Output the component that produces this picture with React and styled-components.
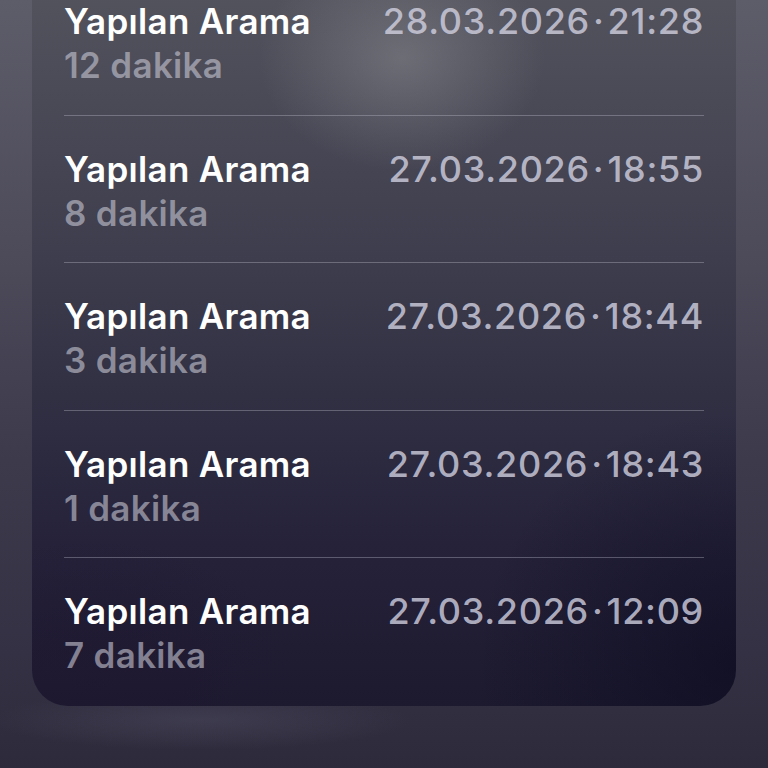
import React from "react";
import styled, { createGlobalStyle } from "styled-components";

const Global = createGlobalStyle`
  html, body { margin: 0; padding: 0; }
  body {
    width: 768px;
    height: 768px;
    overflow: hidden;
    font-family: Inter, "Noto Sans", "Liberation Sans", sans-serif;
    -webkit-font-smoothing: antialiased;
  }
`;

const Screen = styled.div`
  width: 768px;
  height: 768px;
  overflow: hidden;
  box-sizing: border-box;
  padding: 0 32px;
  background:
    radial-gradient(ellipse 280px 40px at 200px 720px, rgba(80, 76, 98, 0.45), transparent 75%),
    linear-gradient(180deg, #5d5c69 0%, #4c4a59 35%, #3c3a4b 60%, #333143 85%, #2d2b3b 100%);
`;

const Card = styled.div`
  margin-top: -32px;
  border-radius: 0 0 36px 36px;
  overflow: hidden;
  padding: 0 32px;
  background:
    radial-gradient(ellipse 190px 150px at 370px 90px, rgba(140, 140, 146, 0.5), transparent 75%),
    radial-gradient(ellipse 320px 320px at 700px 700px, rgba(8, 8, 28, 0.55), transparent 80%),
    radial-gradient(ellipse 260px 200px at 60px 730px, rgba(30, 20, 48, 0.5), transparent 80%),
    linear-gradient(180deg, #55555f 0%, #4a4a57 18%, #3e3e4e 38%, #313043 58%, #25223a 78%, #1d1a2f 100%);
`;

const Row = styled.div`
  height: 147.6px;
  box-sizing: border-box;
  padding-top: 31px;
  display: grid;
  grid-template-columns: 1fr auto;
  grid-template-rows: 44px 44px;
  border-bottom: ${(p) => (p.$last ? "none" : "1.5px solid rgba(190, 190, 205, 0.36)")};
`;

const Title = styled.div`
  font-size: 35px;
  line-height: 44px;
  font-weight: 600;
  color: #ffffff;
  letter-spacing: 0.3px;
  white-space: nowrap;
`;

const Duration = styled.div`
  grid-column: 1;
  font-size: 35px;
  line-height: 44px;
  font-weight: 600;
  color: rgba(200, 200, 212, 0.6);
  letter-spacing: 0.3px;
`;

const Stamp = styled.div`
  grid-column: 2;
  grid-row: 1;
  font-size: 36px;
  line-height: 44px;
  font-weight: 450;
  color: rgba(210, 210, 226, 0.8);
  letter-spacing: 0.7px;
  white-space: nowrap;
  text-align: right;
`;

const Dot = styled.span`
  margin: 0 3px;
`;

const calls = [
  { date: "28.03.2026", time: "21:28", mins: 12 },
  { date: "27.03.2026", time: "18:55", mins: 8 },
  { date: "27.03.2026", time: "18:44", mins: 3 },
  { date: "27.03.2026", time: "18:43", mins: 1 },
  { date: "27.03.2026", time: "12:09", mins: 7 },
];

export default function App() {
  return (
    <>
      <Global />
      <Screen>
        <Card>
          {calls.map((c, i) => (
            <Row key={i} $last={i === calls.length - 1}>
              <Title>Yapılan Arama</Title>
              <Stamp>
                {c.date}
                <Dot>·</Dot>
                {c.time}
              </Stamp>
              <Duration>{c.mins} dakika</Duration>
            </Row>
          ))}
        </Card>
      </Screen>
    </>
  );
}
